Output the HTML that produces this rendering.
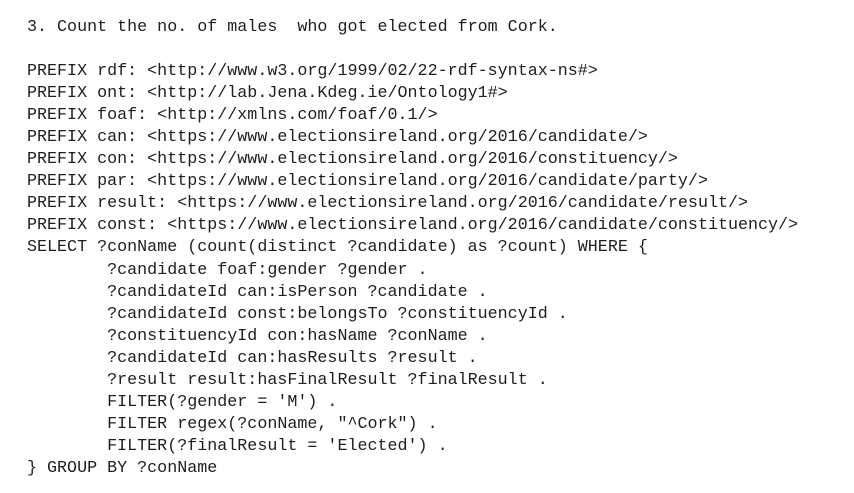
<!DOCTYPE html>
<html><head><meta charset="utf-8"><style>
html,body{margin:0;padding:0;background:#fff;width:854px;height:493px;overflow:hidden}
pre{margin:0;position:absolute;left:27px;top:17px;font-family:"Liberation Mono",monospace;font-size:16.7px;line-height:22.05px;color:#1e1e1e}
</style></head><body><pre>3. Count the no. of males  who got elected from Cork.

PREFIX rdf: &lt;http://www.w3.org/1999/02/22-rdf-syntax-ns#&gt;
PREFIX ont: &lt;http://lab.Jena.Kdeg.ie/Ontology1#&gt;
PREFIX foaf: &lt;http://xmlns.com/foaf/0.1/&gt;
PREFIX can: &lt;https://www.electionsireland.org/2016/candidate/&gt;
PREFIX con: &lt;https://www.electionsireland.org/2016/constituency/&gt;
PREFIX par: &lt;https://www.electionsireland.org/2016/candidate/party/&gt;
PREFIX result: &lt;https://www.electionsireland.org/2016/candidate/result/&gt;
PREFIX const: &lt;https://www.electionsireland.org/2016/candidate/constituency/&gt;
SELECT ?conName (count(distinct ?candidate) as ?count) WHERE {
        ?candidate foaf:gender ?gender .
        ?candidateId can:isPerson ?candidate .
        ?candidateId const:belongsTo ?constituencyId .
        ?constituencyId con:hasName ?conName .
        ?candidateId can:hasResults ?result .
        ?result result:hasFinalResult ?finalResult .
        FILTER(?gender = 'M') .
        FILTER regex(?conName, "^Cork") .
        FILTER(?finalResult = 'Elected') .
} GROUP BY ?conName</pre></body></html>
